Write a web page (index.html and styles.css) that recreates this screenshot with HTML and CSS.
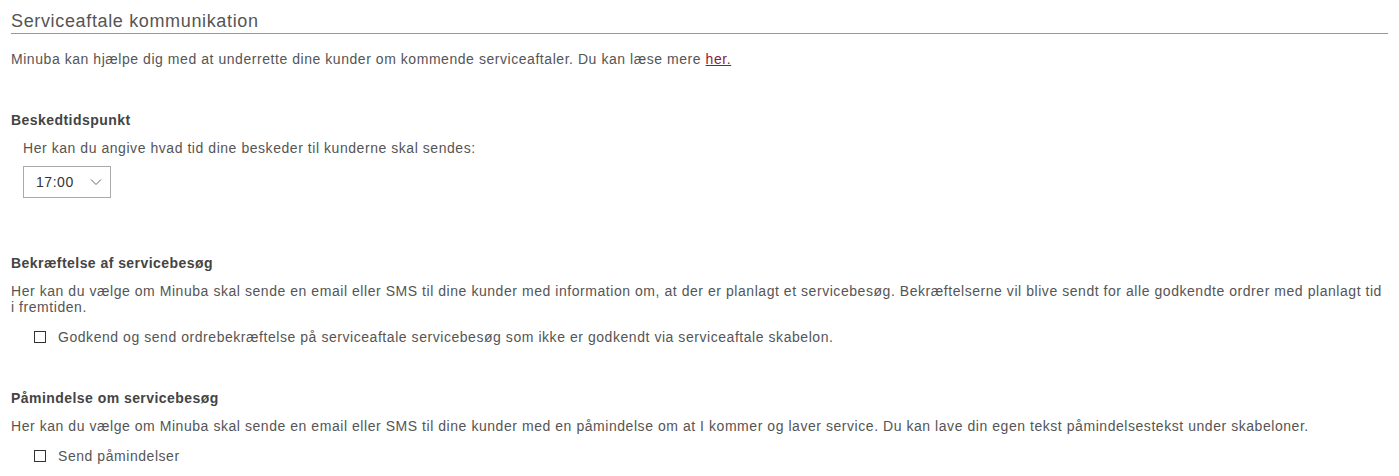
FILE: index.html
```html
<!DOCTYPE html>
<html lang="da">
<head>
    <meta charset="UTF-8">
    <meta name="viewport" content="width=device-width, initial-scale=1.0">
    <title>Serviceaftale kommunikation</title>
    <link rel="stylesheet" href="styles.css">
</head>
<body>
    <main class="container">
        <h1 class="page-title">Serviceaftale kommunikation</h1>
        <p class="intro">Minuba kan hjælpe dig med at underrette dine kunder om kommende serviceaftaler. Du kan læse mere <a href="#">her.</a></p>

        <section class="setting time-setting">
            <h2>Beskedtidspunkt</h2>
            <div class="indent">
                <p>Her kan du angive hvad tid dine beskeder til kunderne skal sendes:</p>
                <div class="select">
                    <span>17:00</span>
                    <svg width="12" height="8" viewBox="0 0 12 8"><path d="M1 1.5 L6 6.5 L11 1.5" fill="none" stroke="#666" stroke-width="1"/></svg>
                </div>
            </div>
        </section>

        <section class="setting">
            <h2>Bekræftelse af servicebesøg</h2>
            <p>Her kan du vælge om Minuba skal sende en email eller SMS til dine kunder med information om, at der er planlagt et servicebesøg. Bekræftelserne vil blive sendt for alle godkendte ordrer med planlagt tid i fremtiden.</p>
            <label class="check"><span class="box"></span>Godkend og send ordrebekræftelse på serviceaftale servicebesøg som ikke er godkendt via serviceaftale skabelon.</label>
        </section>

        <section class="setting">
            <h2>Påmindelse om servicebesøg</h2>
            <p>Her kan du vælge om Minuba skal sende en email eller SMS til dine kunder med en påmindelse om at I kommer og laver service. Du kan lave din egen tekst påmindelsestekst under skabeloner.</p>
            <label class="check"><span class="box"></span>Send påmindelser</label>
        </section>
    </main>
</body>
</html>
```

FILE: styles.css
```css
:root {
    --text-color: #555;
    --heading-color: #444;
    --line-color: #999;
    --link-color: #8c1c3c;
}
body {
    font-family: "Liberation Sans", Arial, sans-serif;
    font-size: 14px;
    letter-spacing: 0.55px;
    line-height: 16px;
    margin: 0;
    padding: 0;
    color: var(--text-color);
    background-color: #fff;
}
.container {
    margin: 0 11px;
}
.page-title {
    font-size: 18px;
    font-weight: normal;
    letter-spacing: 0.65px;
    line-height: 22px;
    margin: 0;
    padding: 10px 0 1px;
    border-bottom: 1px solid var(--line-color);
}
p {
    margin: 0;
}
.intro {
    margin-top: 17px;
}
.intro a {
    color: var(--link-color);
}
.setting {
    margin-top: 45px;
}
.time-setting {
    padding-bottom: 12px;
}
.setting h2 {
    font-size: 14px;
    font-weight: bold;
    letter-spacing: 0.45px;
    color: var(--heading-color);
    margin: 0 0 12px;
    line-height: 16px;
}
.indent {
    padding-left: 12px;
}
.select {
    margin-top: 10px;
    border: 1px solid #aaa;
    color: #333;
    display: flex;
    align-items: center;
    justify-content: space-between;
    padding: 0 8px 0 12px;
    box-sizing: border-box;
    width: 88px;
    height: 32px;
}
.check {
    display: flex;
    align-items: center;
    margin: 14px 0 0 23px;
}
.box {
    width: 10px;
    height: 10px;
    border: 1px solid #333;
    margin-right: 12px;
}
```
